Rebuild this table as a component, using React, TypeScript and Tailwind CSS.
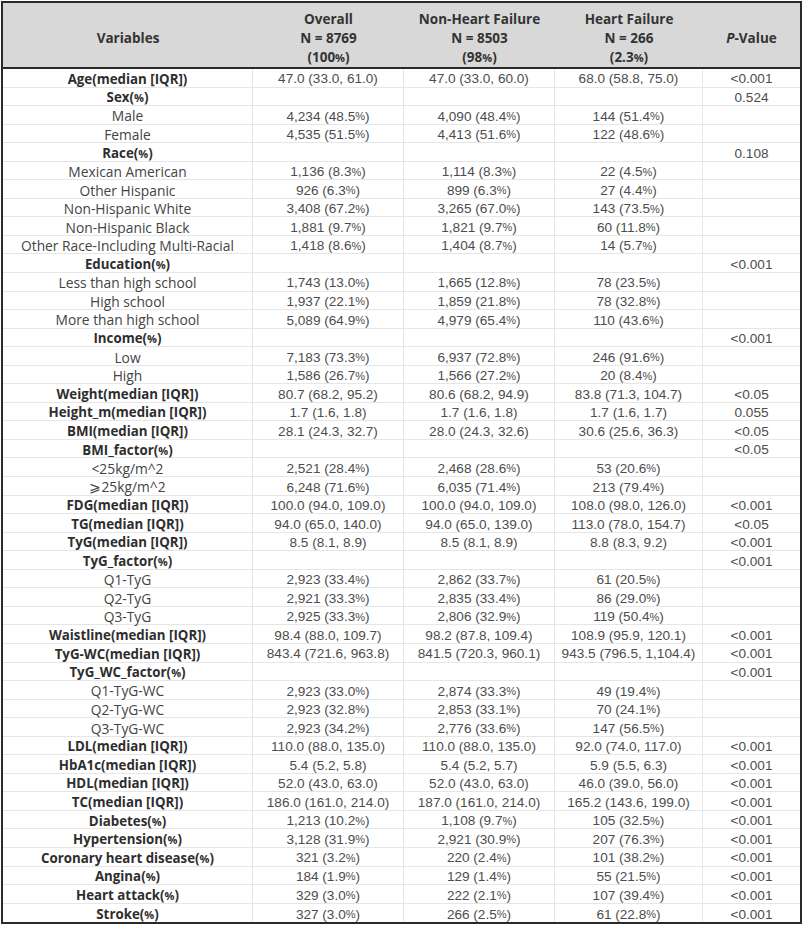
import React from 'react';

type Row = { label: string; bold?: boolean; cells: [string, string, string, string] };

const rows: Row[] = [
  { label: 'Age(median [IQR])', bold: true, cells: ['47.0 (33.0, 61.0)', '47.0 (33.0, 60.0)', '68.0 (58.8, 75.0)', '<0.001'] },
  { label: 'Sex(%)', bold: true, cells: ['', '', '', '0.524'] },
  { label: 'Male', cells: ['4,234 (48.5%)', '4,090 (48.4%)', '144 (51.4%)', ''] },
  { label: 'Female', cells: ['4,535 (51.5%)', '4,413 (51.6%)', '122 (48.6%)', ''] },
  { label: 'Race(%)', bold: true, cells: ['', '', '', '0.108'] },
  { label: 'Mexican American', cells: ['1,136 (8.3%)', '1,114 (8.3%)', '22 (4.5%)', ''] },
  { label: 'Other Hispanic', cells: ['926 (6.3%)', '899 (6.3%)', '27 (4.4%)', ''] },
  { label: 'Non-Hispanic White', cells: ['3,408 (67.2%)', '3,265 (67.0%)', '143 (73.5%)', ''] },
  { label: 'Non-Hispanic Black', cells: ['1,881 (9.7%)', '1,821 (9.7%)', '60 (11.8%)', ''] },
  { label: 'Other Race-Including Multi-Racial', cells: ['1,418 (8.6%)', '1,404 (8.7%)', '14 (5.7%)', ''] },
  { label: 'Education(%)', bold: true, cells: ['', '', '', '<0.001'] },
  { label: 'Less than high school', cells: ['1,743 (13.0%)', '1,665 (12.8%)', '78 (23.5%)', ''] },
  { label: 'High school', cells: ['1,937 (22.1%)', '1,859 (21.8%)', '78 (32.8%)', ''] },
  { label: 'More than high school', cells: ['5,089 (64.9%)', '4,979 (65.4%)', '110 (43.6%)', ''] },
  { label: 'Income(%)', bold: true, cells: ['', '', '', '<0.001'] },
  { label: 'Low', cells: ['7,183 (73.3%)', '6,937 (72.8%)', '246 (91.6%)', ''] },
  { label: 'High', cells: ['1,586 (26.7%)', '1,566 (27.2%)', '20 (8.4%)', ''] },
  { label: 'Weight(median [IQR])', bold: true, cells: ['80.7 (68.2, 95.2)', '80.6 (68.2, 94.9)', '83.8 (71.3, 104.7)', '<0.05'] },
  { label: 'Height_m(median [IQR])', bold: true, cells: ['1.7 (1.6, 1.8)', '1.7 (1.6, 1.8)', '1.7 (1.6, 1.7)', '0.055'] },
  { label: 'BMI(median [IQR])', bold: true, cells: ['28.1 (24.3, 32.7)', '28.0 (24.3, 32.6)', '30.6 (25.6, 36.3)', '<0.05'] },
  { label: 'BMI_factor(%)', bold: true, cells: ['', '', '', '<0.05'] },
  { label: '<25kg/m^2', cells: ['2,521 (28.4%)', '2,468 (28.6%)', '53 (20.6%)', ''] },
  { label: '\u2A7E25kg/m^2', cells: ['6,248 (71.6%)', '6,035 (71.4%)', '213 (79.4%)', ''] },
  { label: 'FDG(median [IQR])', bold: true, cells: ['100.0 (94.0, 109.0)', '100.0 (94.0, 109.0)', '108.0 (98.0, 126.0)', '<0.001'] },
  { label: 'TG(median [IQR])', bold: true, cells: ['94.0 (65.0, 140.0)', '94.0 (65.0, 139.0)', '113.0 (78.0, 154.7)', '<0.05'] },
  { label: 'TyG(median [IQR])', bold: true, cells: ['8.5 (8.1, 8.9)', '8.5 (8.1, 8.9)', '8.8 (8.3, 9.2)', '<0.001'] },
  { label: 'TyG_factor(%)', bold: true, cells: ['', '', '', '<0.001'] },
  { label: 'Q1-TyG', cells: ['2,923 (33.4%)', '2,862 (33.7%)', '61 (20.5%)', ''] },
  { label: 'Q2-TyG', cells: ['2,921 (33.3%)', '2,835 (33.4%)', '86 (29.0%)', ''] },
  { label: 'Q3-TyG', cells: ['2,925 (33.3%)', '2,806 (32.9%)', '119 (50.4%)', ''] },
  { label: 'Waistline(median [IQR])', bold: true, cells: ['98.4 (88.0, 109.7)', '98.2 (87.8, 109.4)', '108.9 (95.9, 120.1)', '<0.001'] },
  { label: 'TyG-WC(median [IQR])', bold: true, cells: ['843.4 (721.6, 963.8)', '841.5 (720.3, 960.1)', '943.5 (796.5, 1,104.4)', '<0.001'] },
  { label: 'TyG_WC_factor(%)', bold: true, cells: ['', '', '', '<0.001'] },
  { label: 'Q1-TyG-WC', cells: ['2,923 (33.0%)', '2,874 (33.3%)', '49 (19.4%)', ''] },
  { label: 'Q2-TyG-WC', cells: ['2,923 (32.8%)', '2,853 (33.1%)', '70 (24.1%)', ''] },
  { label: 'Q3-TyG-WC', cells: ['2,923 (34.2%)', '2,776 (33.6%)', '147 (56.5%)', ''] },
  { label: 'LDL(median [IQR])', bold: true, cells: ['110.0 (88.0, 135.0)', '110.0 (88.0, 135.0)', '92.0 (74.0, 117.0)', '<0.001'] },
  { label: 'HbA1c(median [IQR])', bold: true, cells: ['5.4 (5.2, 5.8)', '5.4 (5.2, 5.7)', '5.9 (5.5, 6.3)', '<0.001'] },
  { label: 'HDL(median [IQR])', bold: true, cells: ['52.0 (43.0, 63.0)', '52.0 (43.0, 63.0)', '46.0 (39.0, 56.0)', '<0.001'] },
  { label: 'TC(median [IQR])', bold: true, cells: ['186.0 (161.0, 214.0)', '187.0 (161.0, 214.0)', '165.2 (143.6, 199.0)', '<0.001'] },
  { label: 'Diabetes(%)', bold: true, cells: ['1,213 (10.2%)', '1,108 (9.7%)', '105 (32.5%)', '<0.001'] },
  { label: 'Hypertension(%)', bold: true, cells: ['3,128 (31.9%)', '2,921 (30.9%)', '207 (76.3%)', '<0.001'] },
  { label: 'Coronary heart disease(%)', bold: true, cells: ['321 (3.2%)', '220 (2.4%)', '101 (38.2%)', '<0.001'] },
  { label: 'Angina(%)', bold: true, cells: ['184 (1.9%)', '129 (1.4%)', '55 (21.5%)', '<0.001'] },
  { label: 'Heart attack(%)', bold: true, cells: ['329 (3.0%)', '222 (2.1%)', '107 (39.4%)', '<0.001'] },
  { label: 'Stroke(%)', bold: true, cells: ['327 (3.0%)', '266 (2.5%)', '61 (22.8%)', '<0.001'] },
];

const cols = 'grid grid-cols-[250px_151px_151px_148px_1fr]';
const labelFont = { fontFamily: '"Open Sans", "Noto Sans CJK SC", sans-serif' };

// the percent sign in the source renders as a small, narrow glyph
const withPct = (s: string) =>
  s.split('%').map((part, i, arr) => (
    <React.Fragment key={i}>
      {part}
      {i < arr.length - 1 && <span className="text-[11px]">%</span>}
    </React.Fragment>
  ));

const HeadCell: React.FC<{ lines: React.ReactNode[] }> = ({ lines }) => (
  <div className="flex flex-col items-center justify-center pt-[7px] leading-[19px]">
    {lines.map((l, i) => (
      <span key={i}>{l}</span>
    ))}
  </div>
);

export default function App() {
  return (
    <div className="w-[803px] h-[926px] bg-white pt-[1px]">
      <div className="ml-[1px] w-[801px] border-2 border-[#2a2a2a]">
        {/* header */}
        <div
          className={`${cols} h-[66px] bg-[#d8d8d8] border-b-2 border-[#2a2a2a] text-[13.5px] font-bold text-[#333]`}
          style={labelFont}
        >
          <HeadCell lines={['Variables']} />
          <HeadCell lines={['Overall', 'N = 8769', <>(100{withPct('%')})</>]} />
          <HeadCell lines={['Non-Heart Failure', 'N = 8503', <>(98{withPct('%')})</>]} />
          <HeadCell lines={['Heart Failure', 'N = 266', <>(2.3{withPct('%')})</>]} />
          <HeadCell
            lines={[
              <>
                <i>P</i>-Value
              </>,
            ]}
          />
        </div>

        {/* body */}
        {rows.map((r, i) => (
          <div key={i} className={`${cols} h-[18.56px] border-b border-[#e6e6e6] last:border-b-0`}>
            <div
              className={`flex items-center justify-center pt-[3px] border-r border-[#e6e6e6] leading-none ${
                r.bold ? 'text-[13.3px] font-bold text-[#2e2e2e]' : 'text-[13.8px] text-[#444]'
              }`}
              style={labelFont}
            >
              {withPct(r.label)}
            </div>
            {r.cells.map((c, j) => (
              <div
                key={j}
                className={`flex items-center justify-center pt-[3px] text-[13.6px] leading-none text-[#4d4d4d] font-['Liberation_Sans',Arial,sans-serif] ${
                  j < 3 ? 'border-r border-[#e6e6e6]' : ''
                }`}
              >
                {withPct(c)}
              </div>
            ))}
          </div>
        ))}
      </div>
    </div>
  );
}
